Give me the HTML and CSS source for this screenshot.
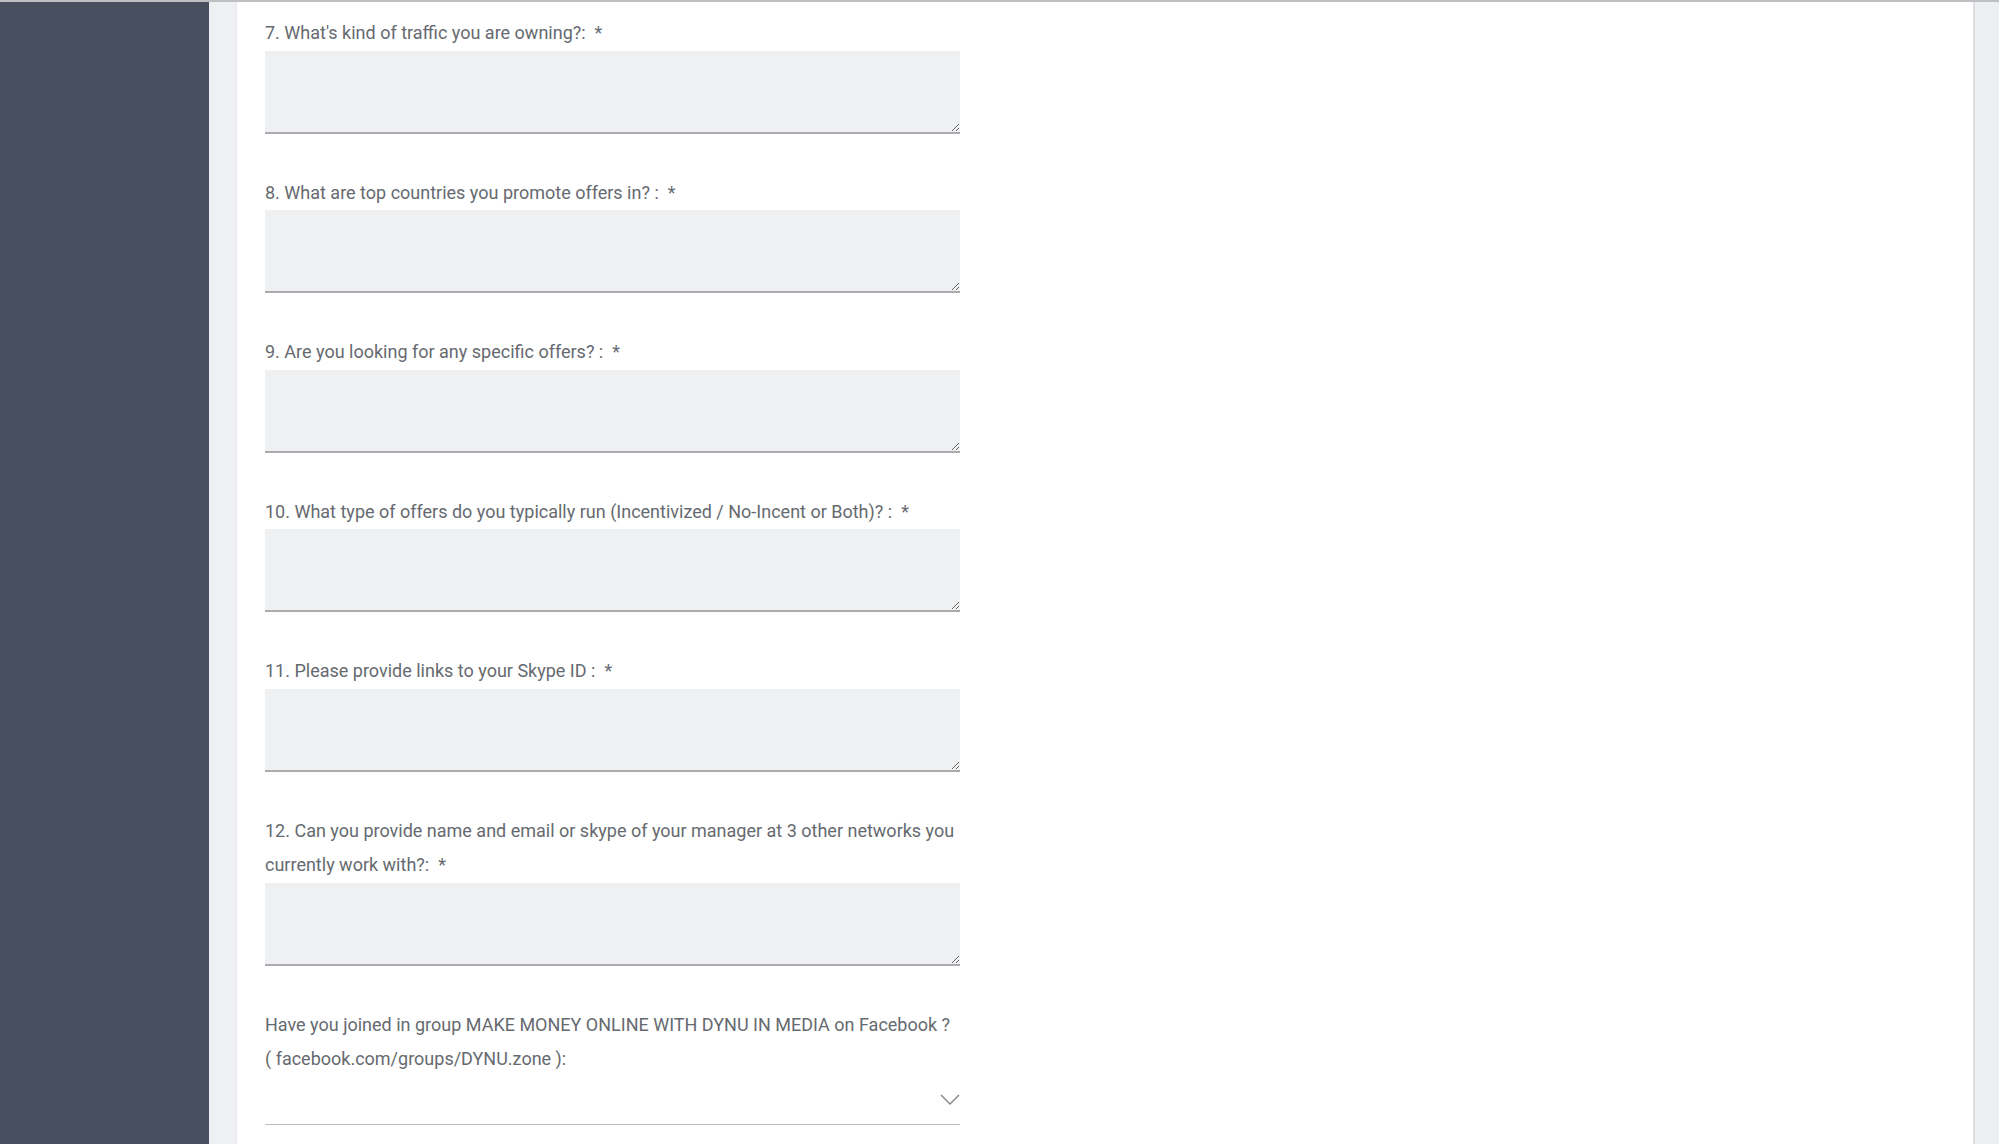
FILE: index.html
```html
<!DOCTYPE html>
<html lang="en">
<head>
<meta charset="UTF-8">
<meta name="viewport" content="width=device-width, initial-scale=1.0">
<title>Publisher Form</title>
<link rel="stylesheet" href="styles.css">
</head>
<body>
    <div class="topline"></div>
    <div class="page">
        <aside class="sidebar"></aside>
        <main class="content">
            <form class="card" id="publisherForm">
                <div class="field">
                    <label for="traffic">7. What's kind of traffic you are owning?:<span class="req">*</span></label>
                    <textarea id="traffic" name="traffic"></textarea>
                </div>
                <div class="field">
                    <label for="countries">8. What are top countries you promote offers in? :<span class="req">*</span></label>
                    <textarea id="countries" name="countries"></textarea>
                </div>
                <div class="field">
                    <label for="offers">9. Are you looking for any specific offers? :<span class="req">*</span></label>
                    <textarea id="offers" name="offers"></textarea>
                </div>
                <div class="field">
                    <label for="offerType">10. What type of offers do you typically run (Incentivized / No-Incent or Both)? :<span class="req">*</span></label>
                    <textarea id="offerType" name="offerType"></textarea>
                </div>
                <div class="field">
                    <label for="skype">11. Please provide links to your Skype ID :<span class="req">*</span></label>
                    <textarea id="skype" name="skype"></textarea>
                </div>
                <div class="field">
                    <label for="managers">12. Can you provide name and email or skype of your manager at 3 other networks you currently work with?:<span class="req">*</span></label>
                    <textarea id="managers" name="managers"></textarea>
                </div>
                <div class="field">
                    <label for="group">Have you joined in group MAKE MONEY ONLINE WITH DYNU IN MEDIA on Facebook ? ( facebook.com/groups/DYNU.zone ):</label>
                    <div class="select" id="group">
                        <svg width="20" height="12" viewBox="0 0 20 12">
                            <path d="M1 1 L10 10 L19 1" fill="none" stroke="#8a8a8a" stroke-width="1.5"/>
                        </svg>
                    </div>
                </div>
            </form>
        </main>
        <div class="rightbar"></div>
    </div>
</body>
</html>
```

FILE: styles.css
```css
html, body {
    margin: 0;
    height: 100%;
    overflow: hidden;
}
body {
    font-family: Roboto, "Liberation Sans", sans-serif;
    background-color: #eef0f3;
}
.topline {
    height: 2px;
    background-color: #bfc0c2;
}
.page {
    display: flex;
    height: 1142px;
}
.sidebar {
    width: 209px;
    background-color: #474e5d;
    flex-shrink: 0;
}
.content {
    flex: 1;
    padding-left: 27px;
    background-color: #eef0f4;
    display: flex;
}
.card {
    flex: 1;
    background-color: #fff;
    padding: 14px 0 0 28px;
    border-left: 1px solid #e6e8eb;
    border-right: 2px solid #dcdde0;
}
.rightbar {
    width: 24px;
    background-color: #eeeff2;
    flex-shrink: 0;
}
.field {
    width: 695px;
    margin-bottom: 42px;
}
label {
    display: block;
    font-size: 18px;
    line-height: 34.5px;
    color: #666a70;
}
.req {
    margin-left: 9px;
}
textarea {
    display: block;
    width: 100%;
    height: 83px;
    margin: 0;
    padding: 10px;
    border: none;
    border-bottom: 2px solid #a9abae;
    background-color: #eff0f2;
    box-sizing: border-box;
    font-family: inherit;
    font-size: 16px;
    outline: none;
}
.select {
    height: 48px;
    border-bottom: 1px solid #b9bbbe;
    display: flex;
    justify-content: flex-end;
    align-items: center;
    box-sizing: border-box;
}
```
